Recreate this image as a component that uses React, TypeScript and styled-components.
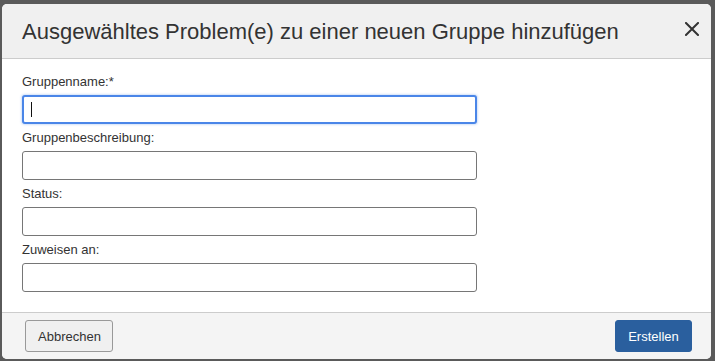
import styled, { createGlobalStyle } from 'styled-components'

const GlobalStyle = createGlobalStyle`
  html, body {
    margin: 0;
    padding: 0;
    background: #5a5a5a;
    font-family: "Liberation Sans", Arial, sans-serif;
  }
`

const FIELDS = [
  { id: 'name', label: 'Gruppenname:*', focused: true },
  { id: 'desc', label: 'Gruppenbeschreibung:', focused: false },
  { id: 'status', label: 'Status:', focused: false },
  { id: 'assign', label: 'Zuweisen an:', focused: false },
]

function CloseIcon() {
  return (
    <svg width="14" height="14" viewBox="0 0 14 14" aria-hidden="true">
      <path d="M1 1 L13 13 M13 1 L1 13" stroke="#333" strokeWidth="2" strokeLinecap="square" />
    </svg>
  )
}

export default function App() {
  return (
    <>
      <GlobalStyle />
      <Backdrop>
        <Dialog>
          <Header>
            <Title>Ausgewähltes Problem(e) zu einer neuen Gruppe hinzufügen</Title>
            <CloseButton aria-label="Schließen">
              <CloseIcon />
            </CloseButton>
          </Header>
          <Body>
            {FIELDS.map((f) => (
              <Field key={f.id}>
                <Label htmlFor={f.id}>{f.label}</Label>
                <InputWrap>
                  <Input id={f.id} type="text" $focused={f.focused} />
                  {f.focused && <Caret />}
                </InputWrap>
              </Field>
            ))}
          </Body>
          <Footer>
            <SecondaryButton>Abbrechen</SecondaryButton>
            <PrimaryButton>Erstellen</PrimaryButton>
          </Footer>
        </Dialog>
      </Backdrop>
    </>
  )
}

const Backdrop = styled.div`
  width: 715px;
  height: 361px;
  padding: 4px 4px 2px 2px;
  box-sizing: border-box;
`

const Dialog = styled.div`
  width: 709px;
  height: 355px;
  background: #fff;
  border-radius: 5px;
  overflow: hidden;
  display: flex;
  flex-direction: column;
`

const Header = styled.div`
  height: 54px;
  background: #f0f0f0;
  border-bottom: 1px solid #cccccc;
  display: flex;
  align-items: center;
  justify-content: space-between;
  padding: 0 12px 0 20px;
`

const Title = styled.h1`
  margin: 0;
  font-size: 22px;
  font-weight: normal;
  color: #333;
  padding-top: 2px;
`

const CloseButton = styled.button`
  border: 0;
  background: transparent;
  padding: 0;
  width: 14px;
  height: 14px;
  display: flex;
  margin-top: -4px;
  cursor: pointer;
`

const Body = styled.div`
  flex: 1;
  padding: 14px 20px 0 20px;
  display: flex;
  flex-direction: column;
  gap: 5px;
`

const Field = styled.div`
  display: flex;
  flex-direction: column;
`

const Label = styled.label`
  font-size: 13px;
  line-height: 17px;
  color: #333;
  margin-bottom: 5px;
`

const InputWrap = styled.div`
  position: relative;
  width: 455px;
`

const Input = styled.input<{ $focused: boolean }>`
  width: 455px;
  height: 29px;
  box-sizing: border-box;
  border: 1px solid #767676;
  border-radius: 3px;
  padding: 0 8px;
  font-size: 13px;
  font-family: inherit;
  outline: none;
  ${({ $focused }) =>
    $focused &&
    `
    border: 2px solid #4a86e8;
    box-shadow: 0 0 2px 1px rgba(74, 134, 232, 0.25);
  `}
`

const Caret = styled.span`
  position: absolute;
  left: 9px;
  top: 7px;
  width: 1px;
  height: 15px;
  background: #111;
`

const Footer = styled.div`
  height: 46px;
  background: #f4f4f4;
  border-top: 1px solid #cccccc;
  display: flex;
  align-items: center;
  justify-content: space-between;
  padding: 0 19px 0 23px;
`

const BaseButton = styled.button`
  height: 32px;
  font-size: 13px;
  font-family: inherit;
  border-radius: 3px;
  padding: 0 12px;
  cursor: pointer;
`

const SecondaryButton = styled(BaseButton)`
  width: 88px;
  background: #f0f0f0;
  color: #333;
  border: 1px solid #999;
`

const PrimaryButton = styled(BaseButton)`
  width: 77px;
  background: #2a5f9e;
  color: #fff;
  border: 1px solid #2a5f9e;
`
